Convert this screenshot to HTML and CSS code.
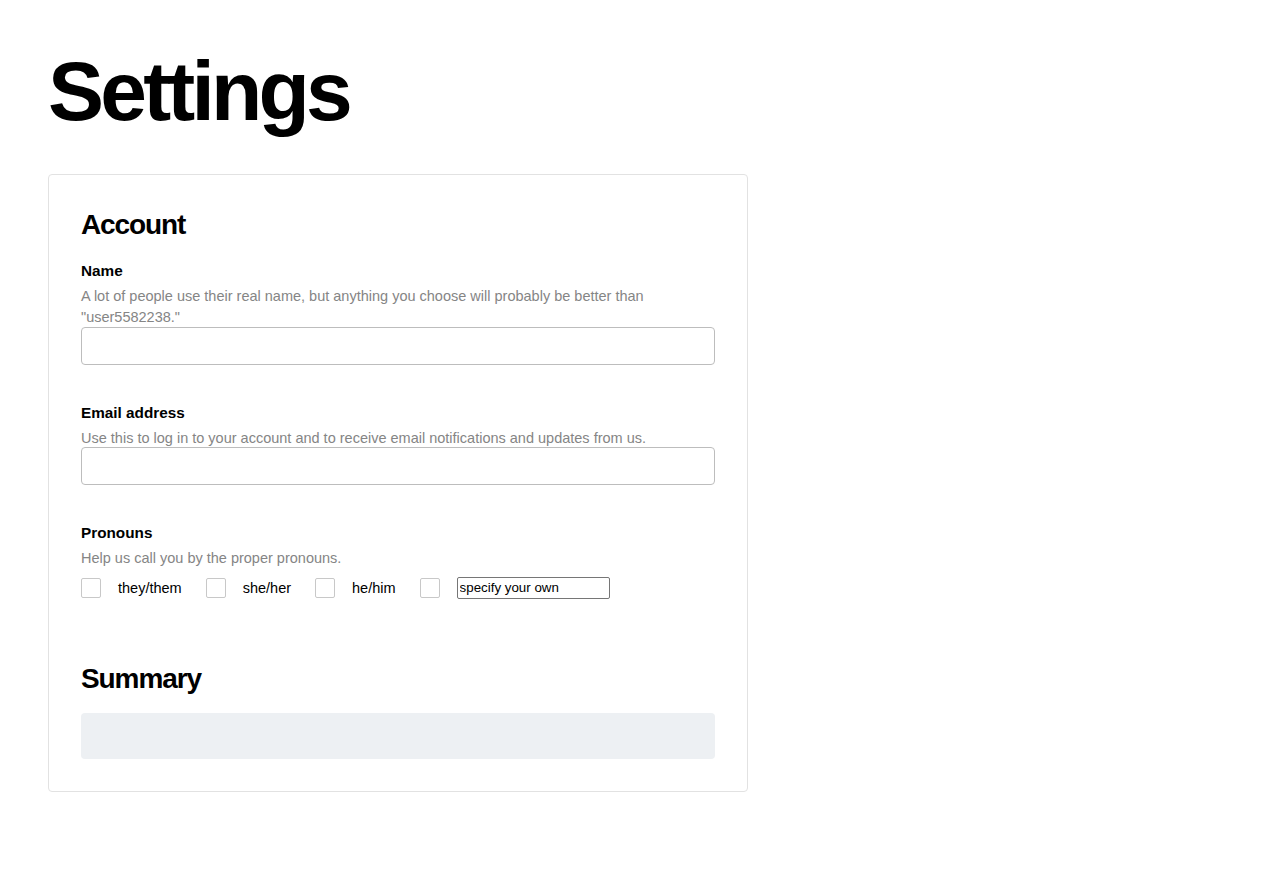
FILE: index.html
```html
<!DOCTYPE html>
<html lang="en">
<head>
<meta charset="utf-8">
<title>Settings</title>
<link rel="stylesheet" href="styles.css">
</head>
<body>
<main class="page">
  <h1 class="title">Settings</h1>
  <section class="card">
    <h2 class="section-title">Account</h2>
    <div class="field">
      <label class="label" for="name">Name</label>
      <p class="hint">A lot of people use their real name, but anything you choose will probably be better than "user5582238."</p>
      <input class="text-input" id="name" type="text">
    </div>
    <div class="field">
      <label class="label" for="email">Email address</label>
      <p class="hint">Use this to log in to your account and to receive email notifications and updates from us.</p>
      <input class="text-input" id="email" type="text">
    </div>
    <div class="field">
      <span class="label">Pronouns</span>
      <p class="hint">Help us call you by the proper pronouns.</p>
      <div class="pronouns">
        <label class="option"><span class="box"></span><span class="option-text">they/them</span></label>
        <label class="option"><span class="box"></span><span class="option-text">she/her</span></label>
        <label class="option"><span class="box"></span><span class="option-text">he/him</span></label>
        <label class="option"><span class="box"></span><input class="own-input" type="text" value="specify your own"></label>
      </div>
    </div>
    <h2 class="section-title summary-title">Summary</h2>
    <div class="summary-box"></div>
  </section>
</main>
</body>
</html>
```

FILE: styles.css
```css
* { box-sizing: border-box; }
html, body {
  margin: 0;
  background: #fff;
  color: #000;
  font-family: "Liberation Sans", Arial, Helvetica, sans-serif;
}
.page {
  padding: 43px 48px 80px;
}
.title {
  margin: 0;
  font-size: 84px;
  line-height: 1.15;
  font-weight: 700;
  letter-spacing: -3.8px;
}
.card {
  margin-top: 34px;
  width: 700px;
  border: 1px solid #e2e2e2;
  border-radius: 4px;
  padding: 33px 32px 32px;
}
.section-title {
  margin: 0;
  font-size: 28px;
  line-height: 34px;
  font-weight: 700;
  letter-spacing: -1.1px;
}
.field {
  margin-top: 17px;
  display: flex;
  flex-direction: column;
}
.field + .field {
  margin-top: 36px;
}
.label {
  font-size: 15.3px;
  line-height: 24px;
  font-weight: 700;
}
.hint {
  margin: 0 0 -2px;
  padding-top: 3px;
  font-size: 14.5px;
  line-height: 21.5px;
  color: #858585;
}
.text-input {
  display: block;
  width: 100%;
  height: 38px;
  margin: 0;
  border: 1px solid #bdbdbd;
  border-radius: 4px;
  background: #fff;
  font: 14px "Liberation Sans", Arial, sans-serif;
  padding: 0 10px;
}
.pronouns {
  display: flex;
  align-items: center;
  margin-top: 9px;
  gap: 24px;
}
.option {
  display: flex;
  align-items: center;
  gap: 17px;
}
.box {
  width: 20px;
  height: 20px;
  border: 1px solid #c8c8c8;
  border-radius: 2px;
  background: #fff;
}
.option-text {
  font-size: 14.5px;
  line-height: 20px;
}
.own-input {
  width: 153px;
  height: 22px;
  margin: 0;
  padding: 1px 2px;
  border: 1px solid #767676;
  border-radius: 2px;
  font: 13.33px "Liberation Sans", Arial, sans-serif;
  color: #000;
  background: #fff;
}
.summary-title {
  margin-top: 63px;
}
.summary-box {
  margin-top: 17px;
  height: 46px;
  background: #edf0f3;
  border-radius: 4px;
}
```
